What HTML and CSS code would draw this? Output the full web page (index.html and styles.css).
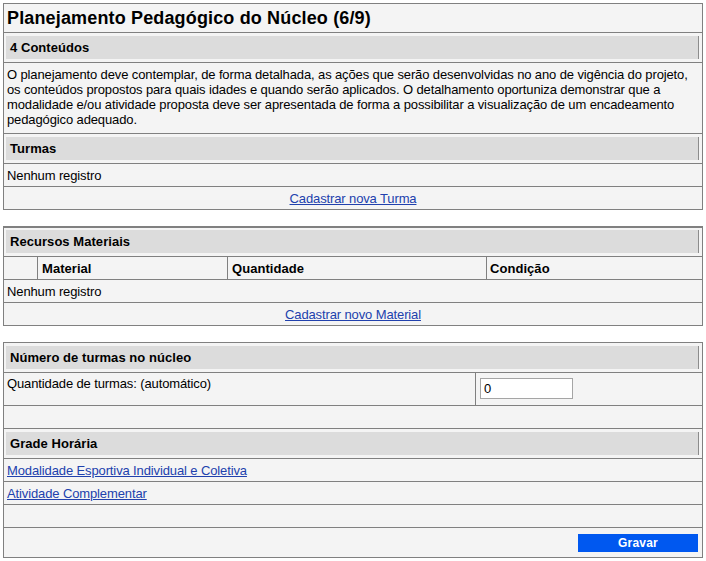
FILE: index.html
```html
<!DOCTYPE html>
<html lang="pt-BR">
<head>
<meta charset="utf-8">
<title>Planejamento Pedagógico do Núcleo</title>
<link rel="stylesheet" href="styles.css">
</head>
<body>
<main class="page">
  <section class="panel">
    <div class="row title">Planejamento Pedagógico do Núcleo (6/9)</div>
    <div class="row head"><div class="band">4 Conteúdos</div></div>
    <div class="row desc">O planejamento deve contemplar, de forma detalhada, as ações que serão desenvolvidas no ano de vigência do projeto, os conteúdos propostos para quais idades e quando serão aplicados. O detalhamento oportuniza demonstrar que a modalidade e/ou atividade proposta deve ser apresentada de forma a possibilitar a visualização de um encadeamento pedagógico adequado.</div>
    <div class="row head"><div class="band">Turmas</div></div>
    <div class="row">Nenhum registro</div>
    <div class="row center"><a href="#">Cadastrar nova Turma</a></div>
  </section>

  <section class="panel panel-thick">
    <div class="row head head-first2"><div class="band">Recursos Materiais</div></div>
    <div class="row cols">
      <div class="col c1"></div>
      <div class="col c2">Material</div>
      <div class="col c3">Quantidade</div>
      <div class="col c4">Condição</div>
    </div>
    <div class="row">Nenhum registro</div>
    <div class="row center"><a href="#">Cadastrar novo Material</a></div>
  </section>

  <section class="panel">
    <div class="row head head-first3"><div class="band">Número de turmas no núcleo</div></div>
    <div class="row qty">
      <div class="qty-label">Quantidade de turmas: (automático)</div>
      <div class="qty-field"><input class="input" type="text" value="0" readonly></div>
    </div>
    <div class="row"></div>
    <div class="row head"><div class="band">Grade Horária</div></div>
    <div class="row"><a href="#">Modalidade Esportiva Individual e Coletiva</a></div>
    <div class="row"><a href="#">Atividade Complementar</a></div>
    <div class="row"></div>
    <div class="row actions"><button class="btn" type="button">Gravar</button></div>
  </section>
</main>
</body>
</html>
```

FILE: styles.css
```css
* { box-sizing: border-box; }

html, body { background: #ffffff; }

body {
  margin: 0;
  padding: 3px 0 0 3px;
  font-family: "Liberation Sans", Arial, sans-serif;
  font-size: 13px;
  letter-spacing: -0.12px;
  color: #000000;
}

.page { width: 700px; }

.panel {
  width: 700px;
  border: 1px solid #808080;
  background: #f4f4f4;
  margin-bottom: 16px;
}

.panel-thick { border-top-width: 2px; }

.row {
  display: flex;
  align-items: center;
  height: 23px;
  padding: 0 3px;
  border-top: 1px solid #808080;
}

.row:first-child { border-top: none; }

.title {
  height: 28px;
  font-size: 18px;
  font-weight: bold;
  letter-spacing: 0.15px;
}

.head {
  height: 30px;
  align-items: stretch;
  padding: 3px 3px 3px 2px;
}

.head-first2 { height: 28px; padding-top: 2px; }
.head-first3 { height: 29px; }

.band {
  flex: 1;
  display: flex;
  align-items: center;
  padding-left: 4px;
  background: #dcdcdc;
  border-right: 1px solid #8c8c8c;
  font-weight: bold;
  letter-spacing: 0.05px;
}

.desc {
  display: block;
  height: 71px;
  padding: 4px 3px 5px 3px;
}

.center { justify-content: center; }

a { color: #2141ad; text-decoration: underline; }

.cols {
  display: grid;
  grid-template-columns: 33px 190px 259px 1fr;
  align-items: stretch;
  padding: 0;
  font-weight: bold;
  letter-spacing: 0.05px;
}

.col {
  display: flex;
  align-items: center;
  padding-left: 4px;
}

.c2, .c3, .c4 { border-left: 1px solid #808080; }
.c4 { padding-left: 3px; }

.qty {
  height: 33px;
  padding: 0;
  align-items: stretch;
}

.qty-label {
  width: 471px;
  padding: 3px 3px 0 3px;
}

.qty-field {
  flex: 1;
  border-left: 1px solid #808080;
  padding: 5px 0 0 4px;
}

.input {
  display: block;
  width: 93px;
  height: 21px;
  margin: 0;
  padding: 0 3px;
  border: 1px solid #a5a5a5;
  background: #ffffff;
  font-family: "Liberation Sans", Arial, sans-serif;
  font-size: 13px;
  color: #000000;
  outline: none;
}

.actions {
  height: 30px;
  align-items: flex-start;
  justify-content: flex-end;
  padding: 6px 4px 0 0;
}

.btn {
  width: 120px;
  height: 18px;
  margin: 0;
  padding: 0;
  border: none;
  background: #0058f0;
  color: #ffffff;
  font-family: "Liberation Sans", Arial, sans-serif;
  font-size: 12px;
  font-weight: bold;
  letter-spacing: 0.2px;
  cursor: pointer;
}
```
